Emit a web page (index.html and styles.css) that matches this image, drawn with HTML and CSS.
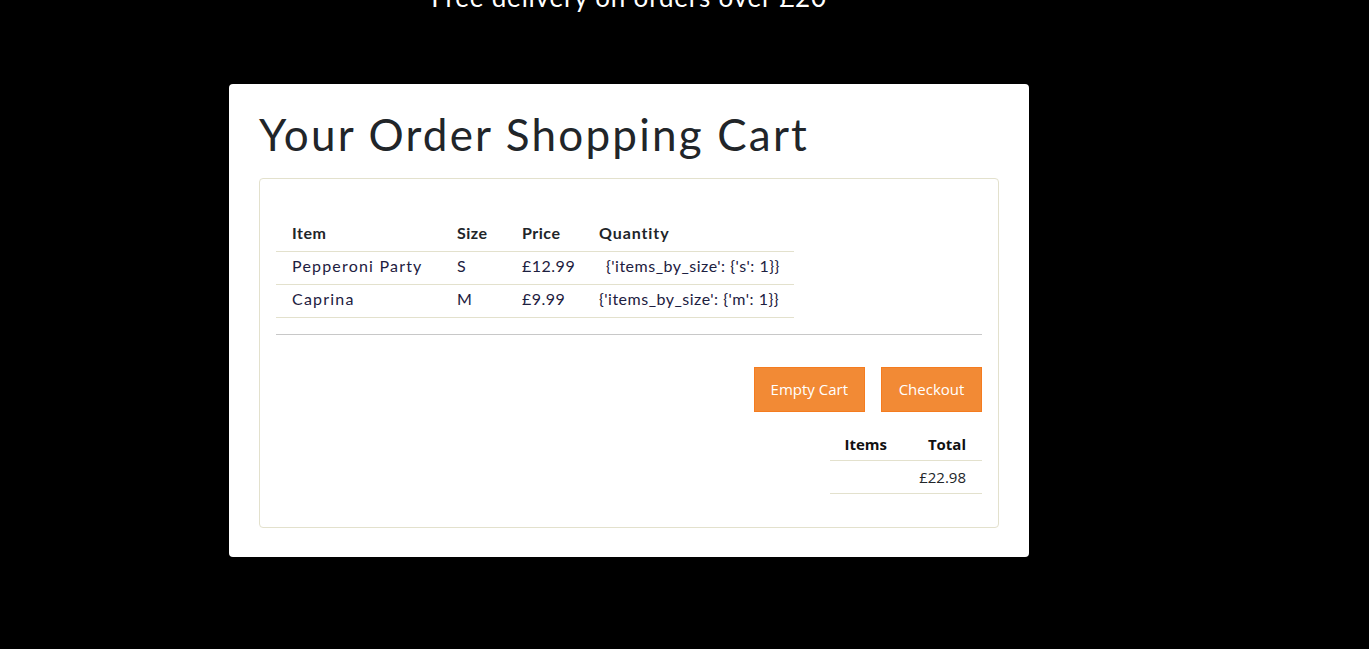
FILE: index.html
```html
<!DOCTYPE html>
<html lang="en">
<head>
<meta charset="utf-8">
<title>Your Order Shopping Cart</title>
<link rel="stylesheet" href="styles.css">
</head>
<body>
<div class="banner">Free delivery on orders over £20</div>
<main class="card">
  <h1 class="title">Your Order Shopping Cart</h1>
  <section class="panel">
    <table class="items">
      <thead>
        <tr><th class="c-item">Item</th><th class="c-size">Size</th><th class="c-price">Price</th><th class="c-qty">Quantity</th></tr>
      </thead>
      <tbody>
        <tr><td class="wide">Pepperoni Party</td><td>S</td><td>£12.99</td><td class="c-qty1">{'items_by_size': {'s': 1}}</td></tr>
        <tr><td class="wide">Caprina</td><td>M</td><td>£9.99</td><td>{'items_by_size': {'m': 1}}</td></tr>
      </tbody>
    </table>
    <hr class="divider">
    <div class="actions">
      <button class="btn">Empty Cart</button>
      <button class="btn btn-checkout">Checkout</button>
    </div>
    <div class="totals-wrap">
      <table class="totals">
        <thead><tr><th class="t-items">Items</th><th class="t-total">Total</th></tr></thead>
        <tbody><tr><td></td><td class="t-total">£22.98</td></tr></tbody>
      </table>
    </div>
  </section>
</main>
</body>
</html>
```
FILE: styles.css
```css
html, body {
  margin: 0;
  padding: 0;
  background: #000;
  height: 100%;
  overflow: hidden;
}
body {
  font-family: "Lato", "Noto Sans", sans-serif;
  color: #212529;
}
.banner {
  color: #fff;
  font-family: "Lato", sans-serif;
  font-size: 26px;
  line-height: 30px;
  letter-spacing: 0.8px;
  text-align: center;
  width: 800px;
  margin: -18px 0 0 229px;
  height: 30px;
}
.card {
  width: 740px;
  margin: 72px 0 0 229px;
  background: #fff;
  border-radius: 4px;
  padding: 22px 30px 29px;
}
.title {
  margin: 0 0 16px;
  font-family: "Lato", sans-serif;
  font-weight: 400;
  font-size: 44px;
  line-height: 56px;
  letter-spacing: 2.2px;
  color: #212529;
}
.panel {
  border: 1px solid #e3e1cd;
  border-radius: 4px;
  padding: 40px 16px 33px;
}
.items {
  border-collapse: collapse;
  font-size: 16px;
  letter-spacing: 0.5px;
}
.items th, .items td {
  text-align: left;
  padding: 0 0 0 16px;
  height: 32px;
  line-height: 28px;
  vertical-align: top;
  border-bottom: 1px solid #e3e1cd;
}
.items th {
  font-weight: 700;
  color: #212529;
}
.items th.c-qty { letter-spacing: 0.9px; }
.items td {
  color: #1d2040;
}
.items td.wide { letter-spacing: 1.2px; }
.c-item { width: 149px; }
.c-size { width: 49px; }
.c-price { width: 61px; }
.c-qty { width: 195px; }
.c-qty1 { padding-left: 23px !important; }
.divider {
  border: 0;
  border-top: 1px solid #c8c8c8;
  margin: 16px 0 32px;
}
.actions {
  display: flex;
  justify-content: flex-end;
  gap: 16px;
}
.btn {
  font-family: "Open Sans", sans-serif;
  font-size: 15px;
  color: #fff;
  background: #f28a35;
  border: 1px solid #f57c1f;
  height: 45px;
  padding: 0 16px 1px;
  border-radius: 0;
}
.btn-checkout { width: 101px; padding: 0 0 1px; }
.totals-wrap {
  display: flex;
  justify-content: flex-end;
  margin-top: 16px;
}
.totals {
  border-collapse: collapse;
  font-family: "Open Sans", sans-serif;
  font-size: 15px;
  width: 152px;
}
.totals th, .totals td {
  text-align: right;
  height: 32px;
  padding: 0 16px 0 0;
  border-bottom: 1px solid #e3e1cd;
}
.totals th { font-weight: 700; color: #111; }
.totals td { color: #212529; }
.t-items { width: 57px; }
```
